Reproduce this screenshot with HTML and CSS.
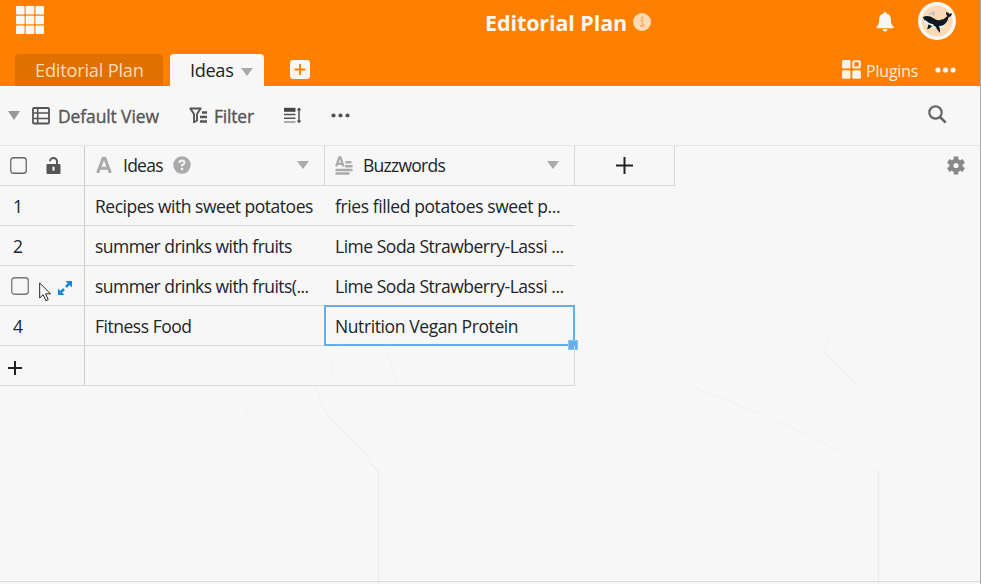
FILE: index.html
```html
<!DOCTYPE html>
<html lang="en">
<head>
<meta charset="utf-8">
<title>Editorial Plan</title>
<link rel="stylesheet" href="styles.css">
</head>
<body>
<div class="app">
  <header class="header">
    <div class="topbar">
      <svg class="apps" width="28" height="28" viewBox="0 0 28 28" fill="#f7f7f7"><rect x="0" y="0" width="8.6" height="8.6" rx="1"/><rect x="9.7" y="0" width="8.6" height="8.6" rx="1"/><rect x="19.4" y="0" width="8.6" height="8.6" rx="1"/><rect x="0" y="9.7" width="8.6" height="8.6" rx="1"/><rect x="9.7" y="9.7" width="8.6" height="8.6" rx="1"/><rect x="19.4" y="9.7" width="8.6" height="8.6" rx="1"/><rect x="0" y="19.4" width="8.6" height="8.6" rx="1"/><rect x="9.7" y="19.4" width="8.6" height="8.6" rx="1"/><rect x="19.4" y="19.4" width="8.6" height="8.6" rx="1"/></svg>
      <h1 class="title">Editorial Plan</h1>
      <svg class="info" width="18" height="18" viewBox="0 0 18 18"><circle cx="9" cy="9" r="9" fill="#ffdab3"/><path d="M7.200 7.400h2.300v5M7.200 12.800h4.200" fill="none" stroke="#ffa64f" stroke-width="1.400"/><circle cx="9.200" cy="4.600" r="1.200" fill="#ffa64f"/></svg>
      <svg class="bell" width="18" height="20" viewBox="0 0 18 20" fill="#f7f7f7"><path d="M9 0c.8 0 1.400.6 1.400 1.400 2.900.6 4.500 2.800 4.500 5.800 0 4.200.8 6 2.500 7.400.5.500.3 1.600-.7 1.600H1.300c-1 0-1.200-1.100-.7-1.600C2.300 13.200 3.100 11.400 3.100 7.200c0-3 1.600-5.200 4.500-5.800C7.600.6 8.200 0 9 0zM6.500 17.200h5a2.500 2.300 0 0 1-5 0z"/></svg>
      <svg class="avatar" width="38" height="38" viewBox="0 0 38 38"><circle cx="19" cy="19" r="19" fill="#f8f8f8"/><circle cx="19" cy="19" r="15.500" fill="#fdd9b5"/><path d="M5 16.500Q7 24 15 25.500l7 1 6-2-6-5z" fill="#d9f3f6"/><path d="M5 15q5-2.500 11 1.500 3 2.500 6 1.500 5-1 7.500-4-1.500-.5-1.500-4 2.500.5 3.500 2.300Q33 10.500 34 12q-.5 2.500-3.500 3.500-1 5-5 7.500-1.500 1-4.500 1 1.500 3 1 7-2.500-2.500-4.500-6.500l-3-1.500q-1.500 3.500-5.500 4.300 1-2.300 1.500-5Q6 19 5 15z" fill="#111820"/><path d="M6.500 18.500q4 4 9 4.800" stroke="#e9fbfd" stroke-width="1.600" fill="none"/><path d="M11 11.500l5 .5-2-2 3 .5-2 3" stroke="#a9bfd0" stroke-width="1" fill="none"/></svg>
    </div>
    <nav class="tabs">
      <div class="tab tab-muted"><span class="t-plan">Editorial Plan</span></div>
      <div class="tab tab-active"><span class="t-ideas">Ideas</span><i class="caret"></i></div>
      <svg class="add-tab" width="20" height="19" viewBox="0 0 20 19"><rect width="20" height="19" rx="3" fill="#f7f7f7"/><path d="M4.500 9.500h11M10 4v11" stroke="#ff8000" stroke-width="1.900"/></svg>
      <svg class="plug-icon" width="19" height="19" viewBox="0 0 19 19" fill="#f9f5ee"><rect x="0" y="0" width="8.500" height="8.500" rx="1.500"/><rect x="11.300" y="1.200" width="6.500" height="6.300" rx=".7" fill="none" stroke="#f9f5ee" stroke-width="2"/><rect x="0" y="10.200" width="8.500" height="8.500" rx="1.500"/><rect x="10.300" y="10.200" width="8.500" height="8.500" rx="1.500"/></svg>
      <span class="plugins">Plugins</span>
      <svg class="tab-more" width="22" height="6" viewBox="0 0 22 6" fill="#f9f5ee"><circle cx="3" cy="3" r="2.600"/><circle cx="10.500" cy="3" r="2.600"/><circle cx="18" cy="3" r="2.600"/></svg>
    </nav>
  </header>

  <div class="toolbar">
    <i class="caret caret-view"></i>
    <svg class="view-icon" width="18" height="18" viewBox="0 0 18 18" fill="none" stroke="#555"><rect x="1" y="1" width="16" height="15.500" rx="1" stroke-width="1.800"/><path d="M1 6h16M1 11.500h16M5.700 1v16" stroke-width="1.600"/></svg>
    <span class="t-view">Default View</span>
    <svg class="filter-icon" width="19" height="17" viewBox="0 0 19 17" fill="none" stroke="#555"><path d="M1.300 1.500h10.400L8 7v6.500l-3 1.800V7z" stroke-width="1.900" stroke-linejoin="round"/><path d="M13 5.500h5M11 10h7M11 14.500h7" stroke-width="2.300"/></svg>
    <span class="t-filter">Filter</span>
    <svg class="height-icon" width="18" height="17" viewBox="0 0 18 17"><path d="M0 .8h11.500v4H0z" fill="#444"/><path d="M0 7.500h11.500M0 11.300h11.500" stroke="#555" stroke-width="1.600"/><path d="M0 15h11.500" stroke="#999" stroke-width="1.600"/><path d="M15 2v13" stroke="#444" stroke-width="1.400"/><path d="M12.700 3.300L15 .5l2.300 2.800zM12.700 13.500L15 16.300l2.300-2.800z" fill="#444"/></svg>
    <svg class="more-icon" width="19" height="5" viewBox="0 0 19 5" fill="#555"><circle cx="2.500" cy="2.500" r="2.100"/><circle cx="9.500" cy="2.500" r="2.100"/><circle cx="16.500" cy="2.500" r="2.100"/></svg>
    <svg class="search-icon" width="19" height="19" viewBox="0 0 19 19" fill="none" stroke="#666"><circle cx="7.500" cy="7.500" r="6.200" stroke-width="2.200"/><path d="M12 12l5.700 5.700" stroke-width="2.600"/></svg>
  </div>

  <main class="sheet">
    <svg class="texture" width="980" height="438" viewBox="0 146 980 438" fill="none" stroke="#ebebeb"><path d="M330 418l40 41M370 463l8.500 9V584M878.500 472V584M824 351l32 34"/><path d="M314 386l4 7 7 18 5 8M691 386l92 37 71 35M862 463l16.500 9" stroke-dasharray="2 2"/><path d="M246 390v30M331 361v22M339 348l5 11M385 348l6 13 5 24M631 391l24 10 31 17M822 305l18 14 12 18 9 4M826 329l4 7-6 14M841 342l4 7" stroke-dasharray="1.500 3"/></svg>
    <div class="row head">
      <div class="cell c-num"><svg class="box" width="17" height="17" viewBox="0 0 17 17"><rect x=".75" y=".75" width="15.500" height="15.500" rx="2.800" fill="none" stroke="#666" stroke-width="1.300"/></svg><svg class="lock" width="15" height="17" viewBox="0 0 15 17"><path d="M4 4.300a3.500 3.300 0 0 1 7 0V8" fill="none" stroke="#555" stroke-width="1.900"/><rect x=".5" y="7" width="14" height="10" rx="1" fill="#555"/><path d="M7.500 9.700v4" stroke="#f7f7f7" stroke-width="2"/></svg></div>
      <div class="cell c-ideas"><svg class="type-a" width="16" height="16" viewBox="0 0 16 16" fill="none" stroke="#aaa" stroke-width="3"><path d="M1.600 16L7.200 1h1.600l5.600 15M3.700 11.200h8.600"/></svg><span class="t-hideas">Ideas</span><svg class="help" width="18" height="18" viewBox="0 0 18 18"><circle cx="9" cy="9" r="8.700" fill="#aaa"/><path d="M6.500 7q0-2.500 2.500-2.500t2.500 2.200Q11.500 8 9 9v1.500" fill="none" stroke="#f7f7f7" stroke-width="1.900"/><circle cx="9" cy="13" r="1.300" fill="#f7f7f7"/></svg><i class="caret caret-col"></i></div>
      <div class="cell c-buzz"><svg class="type-long" width="18" height="19" viewBox="0 0 18 19" fill="none" stroke="#aaa"><path d="M1.200 10.500L4.300 1.500h1.100L8.500 10.500M2.200 7.800h5.300" stroke-width="2.300"/><path d="M11.500 6.300H15.500M11 10.300H16.500M1.500 14h15M1.500 17.500h12" stroke-width="2.400" stroke-linecap="round"/></svg><span class="t-hbuzz">Buzzwords</span><i class="caret caret-col"></i></div>
      <div class="cell c-add"><svg width="17" height="17" viewBox="0 0 17 17"><path d="M0 8.500h17M8.500 0v17" stroke="#222" stroke-width="2"/></svg></div>
      <svg class="gear" width="18" height="19" viewBox="0 0 18 19" fill="none" stroke="#888"><circle cx="9" cy="9.500" r="4.700" stroke-width="4.200"/><path d="M9 .5v3M9 15.500v3M1.200 5l2.600 1.500M14.200 12.500l2.600 1.500M1.200 14l2.600-1.500M14.200 6.500L16.800 5" stroke-width="4.600"/></svg>
    </div>
    <div class="row"><div class="cell c-num"><span class="n">1</span></div><div class="cell c-ideas"><span class="w1">Recipes with sweet potatoes</span></div><div class="cell c-buzz"><span class="w2">fries filled potatoes sweet p...</span></div></div>
    <div class="row"><div class="cell c-num"><span class="n">2</span></div><div class="cell c-ideas"><span class="w3">summer drinks with fruits</span></div><div class="cell c-buzz"><span class="w4">Lime Soda Strawberry-Lassi ...</span></div></div>
    <div class="row"><div class="cell c-num"><svg class="box box-row" width="18" height="18" viewBox="0 0 18 18"><rect x=".75" y=".75" width="16.500" height="16.500" rx="2.800" fill="none" stroke="#777" stroke-width="1.300"/></svg><svg class="expand" width="14" height="14" viewBox="0 0 14 14" fill="#1b87d8"><path d="M7.500 0H14v6.500zM0 7.500V14h6.500z"/><path d="M8 6l3.500-3.500M6 8l-3.500 3.500" stroke="#1b87d8" stroke-width="2.500"/></svg><svg class="pointer" width="13" height="20" viewBox="0 0 13 20"><path d="M.7 1v15l3.500-3.300 2.600 6 2.400-1-2.600-5.900h4.900z" fill="#fff" stroke="#222" stroke-width="1"/></svg></div><div class="cell c-ideas"><span class="w5">summer drinks with fruits(...</span></div><div class="cell c-buzz"><span class="w4">Lime Soda Strawberry-Lassi ...</span></div></div>
    <div class="row"><div class="cell c-num"><span class="n">4</span></div><div class="cell c-ideas"><span class="w6">Fitness Food</span></div><div class="cell c-buzz"><span class="w7">Nutrition Vegan Protein</span><div class="selection"><i class="handle"></i></div></div></div>
    <div class="row"><div class="cell c-num"><svg class="add-row" width="14" height="14" viewBox="0 0 14 14"><path d="M0 7h14M7 0v14" stroke="#222" stroke-width="2"/></svg></div><div class="cell c-ideas"></div><div class="cell c-buzz last"></div></div>
  </main>
  <footer class="footer"></footer>
</div>
</body>
</html>
```
FILE: styles.css
```css
* { box-sizing: border-box; }
body { margin: 0; background: #f7f7f7; color: #212529; font: 17.5px/24px "Open Sans", "Noto Sans", sans-serif; overflow: hidden; }
svg { display: block; flex: none; }
span, h1 { white-space: nowrap; }
.app { width: 981px; height: 584px; display: flex; flex-direction: column; border-right: 1px solid #aaa; }
.header { height: 86px; background: #ff8000; color: #f7f7f7; flex: none; }
.topbar { height: 54px; display: flex; align-items: flex-start; padding-left: 16px; }
.apps { margin-top: 6px; }
.title { margin: 9px 0 0 441px; width: 141px; font-size: 21.5px; line-height: 28px; font-weight: 700; letter-spacing: -.1px; }
.info { margin: 13px 0 0 7px; }
.bell { margin: 12px 0 0 225px; }
.avatar { margin: 2px 0 0 24px; }
.tabs { height: 32px; display: flex; padding-left: 15px; }
.tab { height: 32px; border-radius: 4px 4px 0 0; display: flex; padding: 4px 0 0 20px; line-height: 25px; }
.tab-muted { width: 148px; background: #e07000; color: #ffddb8; font-size: 18.2px; }
.tab-active { width: 94px; margin-left: 7px; background: #f7f7f7; color: #222; font-size: 18.2px; }
.tab-active .t-ideas { width: 44px; }
.caret { width: 0; height: 0; border: 6px solid transparent; border-top: 8px solid #aaa; border-bottom: 0; flex: none; }
.tab-active .caret { margin: 10px 0 0 7px; }
.add-tab { margin: 6px 0 0 26px; }
.plug-icon { margin: 6px 0 0 532px; }
.plugins { margin: 5px 0 0 5px; width: 52px; font-size: 15.8px; color: #fbeedd; }
.tab-more { margin: 13px 0 0 17px; }
.toolbar { height: 60px; display: flex; border-bottom: 1px solid #e6e6e6; color: #555; flex: none; padding-left: 8px; }
.toolbar span { margin-top: 18px; -webkit-text-stroke: .35px #555; }
.caret-view { border-width: 9px 6.5px 0; border-top-color: #999; margin-top: 25px; }
.view-icon { margin: 21px 0 0 12px; }
.toolbar .t-view { margin-left: 8px; width: 101px; }
.filter-icon { margin: 21px 0 0 30px; }
.toolbar .t-filter { margin-left: 6px; width: 40px; }
.height-icon { margin: 21px 0 0 30px; }
.more-icon { margin: 27px 0 0 29px; }
.search-icon { margin: 19px 0 0 578px; }
.sheet { position: relative; flex: 1; }
.texture { position: absolute; left: 0; top: 0; z-index: -1; }
.row { display: flex; height: 40px; }
.cell { display: flex; align-items: center; height: 40px; border-bottom: 1px solid #dadada; padding: 0 10px; flex: none; }
.head .cell { padding-bottom: 1px; }
.c-num { width: 85px; border-right: 1px solid #ccc; position: relative; }
.c-ideas { width: 240px; }
.c-buzz { width: 250px; position: relative; }
.head .c-ideas, .head .c-buzz, .c-add, .last { border-right: 1px solid #d8d8d8; }
.c-add { width: 100px; justify-content: center; }
.n { margin-left: 3px; }
.lock { margin-left: 19px; }
.head .type-a { margin-left: 1px; }
.t-hideas { margin-left: 11px; width: 40px; }
.help { margin-left: 10px; }
.caret-col { border-top-color: #aaa; margin-left: auto; margin-right: 5px; }
.type-long { width: 18px; }
.t-hbuzz { margin-left: 10px; width: 82px; }
.gear { margin: 10px 0 0 272px; }
.expand { margin: 5px 0 0 29px; }
.box-row { margin-left: 1px; }
.pointer { position: absolute; left: 39px; top: 16px; }
.add-row { margin: 4px 0 0 -2px; }
.selection { position: absolute; left: -1px; top: -1px; width: 251px; height: 41px; border: 2px solid #66aee8; }
.handle { position: absolute; right: -5px; bottom: -6px; width: 10px; height: 10px; background: #66aee8; border: 1px solid #8dc3f0; }
.footer { height: 3px; border-top: 1px solid #dadada; flex: none; }
.t-plan { letter-spacing: -.2px; }
.t-ideas { letter-spacing: -.35px; }
.plugins { letter-spacing: -.1px; }
.t-view { letter-spacing: -.12px; }
.t-filter { letter-spacing: -.2px; }
.w1, .w4, .w6 { letter-spacing: -.48px; }
.w3, .w5 { letter-spacing: -.54px; }
.w2, .w7 { letter-spacing: -.4px; }
.t-hideas, .t-hbuzz { letter-spacing: -.75px; }
```
